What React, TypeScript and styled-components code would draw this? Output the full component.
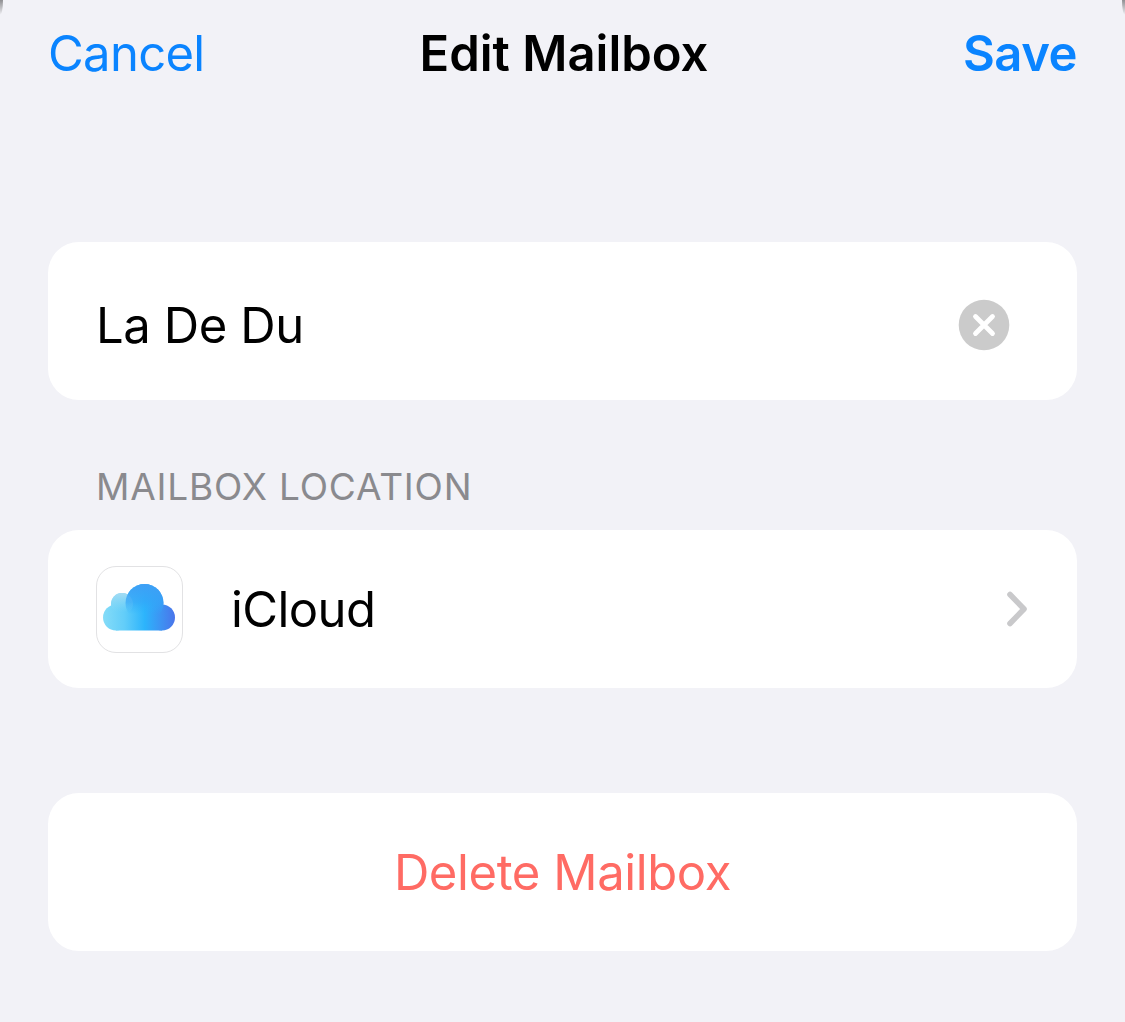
import React from "react";
import styled, { createGlobalStyle } from "styled-components";

const Global = createGlobalStyle`
  html, body { margin: 0; padding: 0; background: #f2f2f7; }
  #root { width: 1125px; height: 1022px; overflow: hidden; }
`;

const Page = styled.div`
  position: relative;
  box-sizing: border-box;
  width: 1125px;
  height: 1022px;
  padding: 0 48px;
  background: #f2f2f7;
  font-family: Inter, "Liberation Sans", sans-serif;
  color: #000;
  overflow: hidden;
`;

const CornerSliver = styled.div<{ $right?: boolean }>`
  position: absolute;
  top: 0;
  ${(p) => (p.$right ? "right: 0;" : "left: 0;")}
  width: 3px;
  height: 15px;
  border-bottom-${(p) => (p.$right ? "left" : "right")}-radius: 3px 15px;
  background: linear-gradient(to bottom, #8f8f92, #d6d6da 75%, #f2f2f7);
`;

const NavBar = styled.header`
  display: grid;
  grid-template-columns: 1fr auto 1fr;
  align-items: center;
  height: 106px;
  margin-bottom: 136px;
`;

const NavAction = styled.span<{ $end?: boolean; $bold?: boolean }>`
  justify-self: ${(p) => (p.$end ? "end" : "start")};
  font-size: 49px;
  font-weight: ${(p) => (p.$bold ? 600 : 400)};
  letter-spacing: ${(p) => (p.$bold ? "-0.5px" : "-0.7px")};
  color: #0a84ff;
`;

const NavTitle = styled.h1`
  margin: 0;
  padding-left: 3px;
  font-size: 49px;
  font-weight: 600;
  letter-spacing: 0;
`;

const Card = styled.section<{ $gap: number; $nudge?: number }>`
  display: flex;
  align-items: center;
  box-sizing: border-box;
  height: 158px;
  margin-bottom: ${(p) => p.$gap}px;
  padding: ${(p) => p.$nudge ?? 0}px 48px 0;
  background: #fff;
  border-radius: 31px;
`;

const NameText = styled.span<{ $tight?: boolean }>`
  flex: 1;
  font-size: 49px;
  letter-spacing: ${(p) => (p.$tight ? "-0.6px" : "-0.4px")};
`;

const ClearIcon = styled.svg`
  width: 52px;
  height: 52px;
  margin-right: 19px;
`;

const SectionLabel = styled.div`
  height: 130px;
  margin-top: -87px;
  box-sizing: border-box;
  padding: 65px 0 0 48px;
  font-size: 37px;
  line-height: 44px;
  letter-spacing: 0.8px;
  color: #8a8a8e;
`;

const IconTile = styled.div`
  display: flex;
  align-items: center;
  justify-content: center;
  box-sizing: border-box;
  width: 87px;
  height: 87px;
  margin-right: 48px;
  padding: 0 1px 4px 0;
  border: 1.5px solid #e2e2e4;
  border-radius: 20px;
  background: #fff;
`;

const Chevron = styled.svg`
  width: 28px;
  height: 40px;
`;

const DangerLabel = styled.span`
  flex: 1;
  text-align: center;
  font-size: 49px;
  letter-spacing: -0.4px;
  color: #ff6b64;
`;

const App = () => (
  <Page>
    <Global />
    <CornerSliver />
    <CornerSliver $right />
    <NavBar>
      <NavAction>Cancel</NavAction>
      <NavTitle>Edit Mailbox</NavTitle>
      <NavAction $end $bold>Save</NavAction>
    </NavBar>
    <Card $gap={87} $nudge={8}>
      <NameText>La De Du</NameText>
      <ClearIcon viewBox="0 0 52 52">
        <circle cx="26" cy="26" r="25.3" fill="#cbcbcb" />
        <path d="M17.5 17.5 L34.5 34.5 M34.5 17.5 L17.5 34.5" stroke="#fff" strokeWidth="4.8" strokeLinecap="round" />
      </ClearIcon>
    </Card>
    <SectionLabel>MAILBOX LOCATION</SectionLabel>
    <Card $gap={105}>
      <IconTile>
        <svg width="72" height="47" viewBox="0 0 72 47">
          <defs>
            <linearGradient id="cloudBase" gradientUnits="userSpaceOnUse" x1="0" y1="0" x2="72" y2="0">
              <stop offset="0" stopColor="#85dcf8" />
              <stop offset="0.3" stopColor="#62cdf9" />
              <stop offset="0.58" stopColor="#2cb4fc" />
              <stop offset="0.8" stopColor="#3d93f3" />
              <stop offset="1" stopColor="#4a74ea" />
            </linearGradient>
            <linearGradient id="cloudDome" gradientUnits="userSpaceOnUse" x1="41" y1="0" x2="41" y2="30">
              <stop offset="0" stopColor="#3f9ff5" />
              <stop offset="0.6" stopColor="#33a6f8" stopOpacity="0.7" />
              <stop offset="1" stopColor="#2cb0fb" stopOpacity="0" />
            </linearGradient>
            <linearGradient id="cloudSmall" gradientUnits="userSpaceOnUse" x1="19" y1="9" x2="19" y2="28">
              <stop offset="0" stopColor="#a6dcf3" />
              <stop offset="1" stopColor="#85d8f7" stopOpacity="0" />
            </linearGradient>
          </defs>
          <g fill="url(#cloudBase)">
            <circle cx="13" cy="33.5" r="13" />
            <circle cx="59" cy="33.5" r="13" />
            <rect x="13" y="22" width="46" height="24.5" />
            <circle cx="19" cy="20" r="11" />
            <circle cx="41.5" cy="19" r="19" />
          </g>
          <circle cx="19" cy="20" r="11" fill="url(#cloudSmall)" />
          <circle cx="41.5" cy="19" r="19" fill="url(#cloudDome)" />
        </svg>
      </IconTile>
      <NameText $tight>iCloud</NameText>
      <Chevron viewBox="0 0 28 40">
        <path d="M9 5.5 L23 20 L9 34.5" fill="none" stroke="#c9c9cb" strokeWidth="5.6" strokeLinecap="round" strokeLinejoin="round" />
      </Chevron>
    </Card>
    <Card $gap={0}>
      <DangerLabel>Delete Mailbox</DangerLabel>
    </Card>
  </Page>
);

export default App;
